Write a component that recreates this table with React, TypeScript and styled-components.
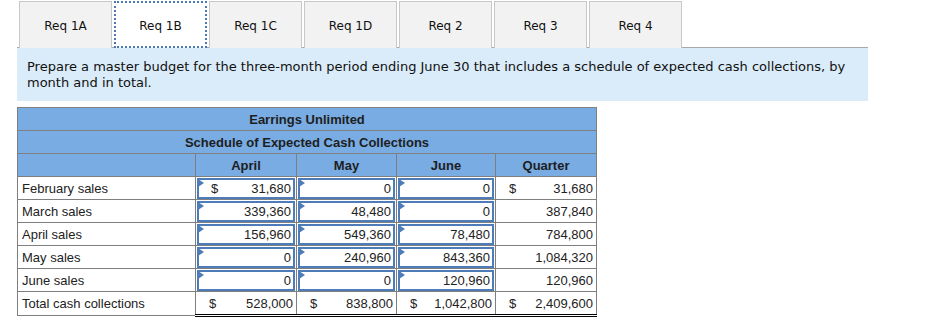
import React from 'react';
import styled, { createGlobalStyle } from 'styled-components';

type Cell = { value: string; dollar?: boolean; input?: boolean };
type Row = { label: string; cells: Cell[]; total?: boolean };

const tabs = ['Req 1A', 'Req 1B', 'Req 1C', 'Req 1D', 'Req 2', 'Req 3', 'Req 4'];

const rows: Row[] = [
  {
    label: 'February sales',
    cells: [
      { value: '31,680', dollar: true, input: true },
      { value: '0', input: true },
      { value: '0', input: true },
      { value: '31,680', dollar: true },
    ],
  },
  {
    label: 'March sales',
    cells: [
      { value: '339,360', input: true },
      { value: '48,480', input: true },
      { value: '0', input: true },
      { value: '387,840' },
    ],
  },
  {
    label: 'April sales',
    cells: [
      { value: '156,960', input: true },
      { value: '549,360', input: true },
      { value: '78,480', input: true },
      { value: '784,800' },
    ],
  },
  {
    label: 'May sales',
    cells: [
      { value: '0', input: true },
      { value: '240,960', input: true },
      { value: '843,360', input: true },
      { value: '1,084,320' },
    ],
  },
  {
    label: 'June sales',
    cells: [
      { value: '0', input: true },
      { value: '0', input: true },
      { value: '120,960', input: true },
      { value: '120,960' },
    ],
  },
  {
    label: 'Total cash collections',
    total: true,
    cells: [
      { value: '528,000', dollar: true },
      { value: '838,800', dollar: true },
      { value: '1,042,800', dollar: true },
      { value: '2,409,600', dollar: true },
    ],
  },
];

const GlobalStyle = createGlobalStyle`
  body {
    margin: 0;
    background: #fff;
  }
`;

const Page = styled.div`
  padding: 1px 0 0 17px;
  width: 851px;
`;

const TabBar = styled.div`
  display: flex;
  gap: 2px;
  padding-left: 2px;
`;

const Tab = styled.div<{ $active?: boolean }>`
  width: 93px;
  height: 47px;
  box-sizing: border-box;
  display: flex;
  align-items: center;
  justify-content: center;
  font-family: 'DejaVu Sans', Verdana, sans-serif;
  font-size: 12px;
  color: #111;
  background: ${p => (p.$active ? '#fff' : '#f2f2f2')};
  border: ${p => (p.$active ? '2px dotted #4a78b5' : '1px solid #c8c8c8')};
  border-bottom: ${p => (p.$active ? '2px dotted #4a78b5' : 'none')};
  position: relative;
  z-index: 1;
  margin-bottom: -1px;
  padding-top: 2px;
`;

const Instructions = styled.div`
  background: #daecf9;
  border-top: 1px solid #a8a8a8;
  padding: 11px 10px 10px 10px;
  font-family: 'DejaVu Sans', Verdana, sans-serif;
  font-size: 13px;
  line-height: 16px;
  color: #111;
`;

const Table = styled.table`
  margin-top: 6px;
  border-collapse: collapse;
  table-layout: fixed;
  width: 580px;
  font-family: 'Liberation Sans', Arial, sans-serif;
  font-size: 13px;
  color: #222;
  border: 1px solid #7f7f7f;
`;

const HeadCell = styled.th`
  background: #78ace2;
  height: 22px;
  padding: 0;
  font-weight: bold;
  text-align: center;
  color: #1e1e1e;
  border: 1px solid #7f7f7f;
`;

const LabelCell = styled.td`
  height: 22px;
  padding: 0 0 0 4px;
  border: 1px solid #7f7f7f;
  white-space: nowrap;
`;

const ValueCell = styled.td<{ $total?: boolean }>`
  height: 22px;
  padding: 0;
  border: 1px solid #7f7f7f;
  ${p =>
    p.$total &&
    `
    border-top: 1px solid #000;
    border-bottom: 3px double #000;
  `}
`;

const Amount = styled.div<{ $input?: boolean }>`
  position: relative;
  display: flex;
  justify-content: space-between;
  align-items: center;
  box-sizing: border-box;
  height: ${p => (p.$input ? '21px' : '22px')};
  margin: ${p => (p.$input ? '0 1px 0 1px' : '0')};
  padding: ${p => (p.$input ? '0 2px 0 12px' : '0 3px 0 13px')};
  border: ${p => (p.$input ? '2px solid #4d7cb8' : 'none')};
  background: #fff;

  ${p =>
    p.$input &&
    `
    &::before {
      content: '';
      position: absolute;
      left: -1px;
      top: -1px;
      border-top: 4px solid transparent;
      border-bottom: 4px solid transparent;
      border-left: 6px solid #4d7cb8;
    }
  `}
`;

const Dollar = styled.span``;

const Num = styled.span`
  margin-left: auto;
`;

export default function App() {
  return (
    <Page>
      <GlobalStyle />
      <TabBar>
        {tabs.map(t => (
          <Tab key={t} $active={t === 'Req 1B'}>
            {t}
          </Tab>
        ))}
      </TabBar>
      <Instructions>
        Prepare a master budget for the three-month period ending June 30 that includes a schedule of expected cash
        collections, by month and in total.
      </Instructions>
      <Table>
        <colgroup>
          <col style={{ width: 178 }} />
          <col style={{ width: 101 }} />
          <col style={{ width: 100 }} />
          <col style={{ width: 99 }} />
          <col style={{ width: 101 }} />
        </colgroup>
        <thead>
          <tr>
            <HeadCell colSpan={5}>Earrings Unlimited</HeadCell>
          </tr>
          <tr>
            <HeadCell colSpan={5}>Schedule of Expected Cash Collections</HeadCell>
          </tr>
          <tr>
            <HeadCell />
            <HeadCell>April</HeadCell>
            <HeadCell>May</HeadCell>
            <HeadCell>June</HeadCell>
            <HeadCell>Quarter</HeadCell>
          </tr>
        </thead>
        <tbody>
          {rows.map(r => (
            <tr key={r.label}>
              <LabelCell>{r.label}</LabelCell>
              {r.cells.map((c, i) => (
                <ValueCell key={i} $total={r.total}>
                  <Amount $input={c.input}>
                    {c.dollar && <Dollar>$</Dollar>}
                    <Num>{c.value}</Num>
                  </Amount>
                </ValueCell>
              ))}
            </tr>
          ))}
        </tbody>
      </Table>
    </Page>
  );
}
